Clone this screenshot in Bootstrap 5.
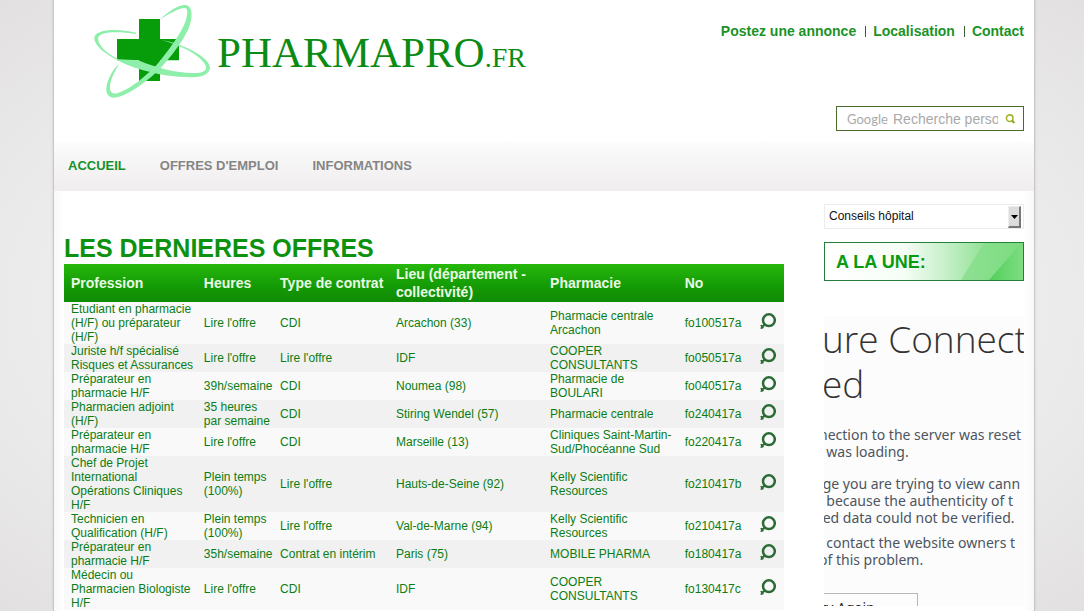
<!DOCTYPE html>
<html lang="fr">
<head>
<meta charset="utf-8">
<meta name="viewport" content="width=device-width, initial-scale=1">
<title>Pharmapro.fr</title>
<link href="https://cdn.jsdelivr.net/npm/bootstrap@5.3.0/dist/css/bootstrap.min.css" rel="stylesheet">
<style>
body{font-family:"Liberation Sans",Arial,sans-serif;font-size:12px;line-height:14px;color:#0b7d14;padding-left:4px;background:radial-gradient(ellipse farthest-corner at center,#f1f1f1 45%,#ebeaeb 72%,#e2e0e1 100%)}
a{text-decoration:none;color:inherit}
.site{max-width:980px;min-height:100vh;background:linear-gradient(90deg,#f8f8f8 0,#fff 10px calc(100% - 10px),#f8f8f8 100%);box-shadow:0 0 0 1px #c8c8c8,0 0 3px #aaa}
.site-head{height:142px;padding:0 10px 0 36px;background:#fff}
.brand-name{font-family:"Liberation Serif",serif;font-size:43px;line-height:50px;color:#0a8c14;margin:28px 0 0 3px}
.brand-tld{font-size:28px}
.top-links{font-size:14px;line-height:16px;margin-top:23px;font-weight:700;color:#1b9327}
.top-links li+li{border-left:1px solid #3a5a3a;padding-left:7px;margin-left:9px;line-height:11px}
.search-box{width:188px;height:25px;border:1px solid #4a6a2c;background:#fff;color:#aaa;font-size:14px;padding:0 8px 0 10px;margin-bottom:11px}
.search-box input{font-size:14px;color:#999;width:105px;background:none;outline:0}
.search-box input::placeholder{color:#a9a9a9;opacity:1}
.search-logo{font-family:Lato,sans-serif;font-size:13px;width:46px}
.main-nav{height:49px;padding:0 14px;gap:34px;font-size:13px;font-weight:700;color:#858585;background:linear-gradient(#fcfcfc,#f3f1f2 70%,#efedee);border-bottom:1px solid #f0eeef}
.main-nav .active{color:#14912a}
.content{padding:0 10px}
.main-col{padding-right:40px}
.page-title{font-size:25px;line-height:30px;font-weight:700;color:#0c920f;margin:42px 0 1px}
.offers{width:100%;table-layout:fixed;border-collapse:collapse}
.offers th,.offers td{padding:0 2px 0 3px;vertical-align:middle}
.offers th:first-child,.offers td:first-child{padding-left:7px}
.offers thead{background:linear-gradient(#26b70b,#149a06 60%,#108a05)}
.offers th{color:#e9fbe4;font-size:14px;line-height:18px;height:38px}
.offers th:nth-child(3){padding-right:0}
.offers tbody tr:nth-child(odd){background:#f9f9f9}
.offers tbody tr:nth-child(even){background:#f1f1f1}
.offers svg{display:block;margin-bottom:4px}
.c-job{width:19%}.c-hours{width:10.6%}.c-type{width:16.1%}.c-place{width:21.4%}.c-shop{width:18.7%}.c-ref{width:10.4%}
.side{width:200px;margin-top:13px}
.topic{height:25px;border:1px solid #ececec;background:#fff;margin-bottom:13px}
.topic select{appearance:none;border:0;outline:0;background:none;width:100%;height:22px;padding:0 18px 0 4px;font-size:12px;color:#111}
.topic-arrow{right:2px;top:1px;width:13px;height:22px;background:#dcdcdc;border:1px solid #eee;border-right:2px solid #777;border-bottom:2px solid #777;pointer-events:none}
.headline{height:39px;border:1px solid #23803a;font-size:18px;line-height:38px;font-weight:700;color:#089a10;padding-left:11px;margin:0 0 35px;background:linear-gradient(90deg,#fff 0,#f6fdf6 40%,#c4efc6 62%,#93e297 80%)}
.headline svg{inset:0}
.frame{height:290px;background:#fcfcfc;overflow:hidden;white-space:pre;font-family:"Noto Sans",sans-serif;font-size:14px;line-height:17px;color:#4c555f}
.frame h2{font-family:"Open Sans",sans-serif;font-weight:300;font-size:37px;line-height:45px;color:#333;margin:0 0 20px -2px}
.frame p{margin:0 0 15px -5px}
.frame p.tight{margin-bottom:8px}
.frame button{display:block;width:148px;height:30px;margin:25px 0 0 -54px;border:1px solid #b8b8b8;background:#fcfcfc;font-size:14px;line-height:20px;color:#222;padding:0;text-align:center}
</style>
</head>
<body>
<svg class="d-none">
  <symbol id="loupe" viewBox="0 0 16 16"><circle cx="8.900" cy="7.200" r="5.900" fill="none" stroke="#2b6b35" stroke-width="2.500"/><path d="M.2 12.600 1.500 11.800 2.800 12.200 3.800 10.600 6 12.700 3.700 13.600 3.600 15.200 1.200 15.900.2 15.300 1.200 14z" fill="#2b6b35"/></symbol>
</svg>
<div class="site mx-auto">
  <header class="site-head d-flex justify-content-between">
    <a href="#" class="d-flex align-items-start">
      <svg width="124" height="100" viewBox="120 0 372 300" aria-hidden="true">
        <path fill="#069c0a" d="M267 57h63v60h57v64h-57v62h-63v-62h-66v-64h66z"/>
        <g fill="#8eefaa">
          <path d="M258 98C200 84 135 88 133 113C131 145 200 185 260 205C330 228 400 234 440 231C478 227 490 205 470 183C445 155 390 130 335 120C395 138 440 160 462 188C475 205 468 217 440 219C390 222 320 205 265 181L205 178C165 158 145 135 144 115C145 95 200 92 258 102Z"/>
          <path d="M330 58C360 30 390 12 408 15C430 20 428 55 415 88C395 130 350 190 310 225C270 260 220 293 190 293C165 290 165 265 175 240C183 220 195 200 208 192C195 212 180 240 180 262C180 280 190 284 205 278C240 268 290 225 315 200C350 160 395 100 408 60C415 30 412 22 400 24C385 26 360 40 330 58Z"/>
        </g>
      </svg>
      <span class="brand-name">PHARMAPRO<span class="brand-tld">.FR</span></span>
    </a>
    <div class="d-flex flex-column align-items-end justify-content-between">
      <ul class="top-links list-unstyled d-flex align-items-center mb-0">
        <li><a href="#">Postez une annonce</a></li>
        <li><a href="#">Localisation</a></li>
        <li><a href="#">Contact</a></li>
      </ul>
      <form class="search-box d-flex align-items-center">
        <label for="q" class="search-logo">Google</label>
        <input id="q" type="text" class="border-0 p-0" placeholder="Recherche personnalisée">
        <svg class="ms-auto" width="10" height="10" viewBox="0 0 10 10"><circle cx="4.700" cy="4.200" r="3.300" fill="none" stroke="#a3b52a" stroke-width="1.600"/><path d="M7 6.500 9.300 9" stroke="#8fa51c" stroke-width="2"/></svg>
      </form>
    </div>
  </header>
  <nav class="main-nav d-flex align-items-center">
    <a href="#" class="active">ACCUEIL</a>
    <a href="#">OFFRES D'EMPLOI</a>
    <a href="#">INFORMATIONS</a>
  </nav>
  <div class="content d-flex align-items-start">
    <main class="main-col flex-grow-1">
      <h1 class="page-title">LES DERNIERES OFFRES</h1>
      <table class="offers">
        <colgroup><col class="c-job"><col class="c-hours"><col class="c-type"><col class="c-place"><col class="c-shop"><col class="c-ref"><col></colgroup>
        <thead><tr><th>Profession</th><th>Heures</th><th>Type de contrat</th><th>Lieu (département - collectivité)</th><th>Pharmacie</th><th>No</th><th></th></tr></thead>
        <tbody>
          <tr><td>Etudiant en pharmacie (H/F) ou préparateur (H/F)</td><td>Lire l'offre</td><td>CDI</td><td>Arcachon (33)</td><td>Pharmacie centrale Arcachon</td><td>fo100517a</td><td><a href="#" aria-label="Voir"><svg width="16" height="16"><use href="#loupe"/></svg></a></td></tr>
          <tr><td>Juriste h/f spécialisé Risques et Assurances</td><td>Lire l'offre</td><td>Lire l'offre</td><td>IDF</td><td>COOPER CONSULTANTS</td><td>fo050517a</td><td><a href="#" aria-label="Voir"><svg width="16" height="16"><use href="#loupe"/></svg></a></td></tr>
          <tr><td>Préparateur en pharmacie H/F</td><td>39h/semaine</td><td>CDI</td><td>Noumea (98)</td><td>Pharmacie de BOULARI</td><td>fo040517a</td><td><a href="#" aria-label="Voir"><svg width="16" height="16"><use href="#loupe"/></svg></a></td></tr>
          <tr><td>Pharmacien adjoint (H/F)</td><td>35 heures par semaine</td><td>CDI</td><td>Stiring Wendel (57)</td><td>Pharmacie centrale</td><td>fo240417a</td><td><a href="#" aria-label="Voir"><svg width="16" height="16"><use href="#loupe"/></svg></a></td></tr>
          <tr><td>Préparateur en pharmacie H/F</td><td>Lire l'offre</td><td>CDI</td><td>Marseille (13)</td><td>Cliniques Saint-Martin-Sud/Phocéanne Sud</td><td>fo220417a</td><td><a href="#" aria-label="Voir"><svg width="16" height="16"><use href="#loupe"/></svg></a></td></tr>
          <tr><td>Chef de Projet International Opérations Cliniques H/F</td><td>Plein temps (100%)</td><td>Lire l'offre</td><td>Hauts-de-Seine (92)</td><td>Kelly Scientific Resources</td><td>fo210417b</td><td><a href="#" aria-label="Voir"><svg width="16" height="16"><use href="#loupe"/></svg></a></td></tr>
          <tr><td>Technicien en Qualification (H/F)</td><td>Plein temps (100%)</td><td>Lire l'offre</td><td>Val-de-Marne (94)</td><td>Kelly Scientific Resources</td><td>fo210417a</td><td><a href="#" aria-label="Voir"><svg width="16" height="16"><use href="#loupe"/></svg></a></td></tr>
          <tr><td>Préparateur en pharmacie H/F</td><td>35h/semaine</td><td>Contrat en intérim</td><td>Paris (75)</td><td>MOBILE PHARMA</td><td>fo180417a</td><td><a href="#" aria-label="Voir"><svg width="16" height="16"><use href="#loupe"/></svg></a></td></tr>
          <tr><td>Médecin ou Pharmacien Biologiste H/F</td><td>Lire l'offre</td><td>CDI</td><td>IDF</td><td>COOPER CONSULTANTS</td><td>fo130417c</td><td><a href="#" aria-label="Voir"><svg width="16" height="16"><use href="#loupe"/></svg></a></td></tr>
        </tbody>
      </table>
    </main>
    <aside class="side flex-shrink-0">
      <div class="topic position-relative">
        <select aria-label="Rubrique"><option>Conseils hôpital</option></select>
        <span class="topic-arrow position-absolute d-flex align-items-center justify-content-center"><svg width="7" height="4" viewBox="0 0 7 4"><path d="M0 0h7L3.500 4z"/></svg></span>
      </div>
      <h2 class="headline position-relative"><svg class="position-absolute" width="198" height="37" viewBox="0 0 198 37" aria-hidden="true"><defs><linearGradient id="band"><stop offset="0" stop-color="#8fe093"/><stop offset="1" stop-color="#7bdc80"/></linearGradient><linearGradient id="corner"><stop offset="0" stop-color="#52d05a"/><stop offset="1" stop-color="#7edc82"/></linearGradient></defs><path d="M159 0h39v37h-62z" fill="url(#band)"/><path d="M196 0h2v37h-34z" fill="url(#corner)"/></svg><span class="position-relative">A LA UNE:</span></h2>
      <div class="frame"><h2>ure Connect
ed</h2><p>nection to the server was reset
  was loading.</p><p class="tight"> ge you are trying to view cann
  because the authenticity of t
 ed data could not be verified.</p><p>  contact the website owners t
of this problem.</p><button type="button">Try Again</button></div>
    </aside>
  </div>
</div>
<script src="https://cdn.jsdelivr.net/npm/bootstrap@5.3.0/dist/js/bootstrap.bundle.min.js"></script>
</body>
</html>
